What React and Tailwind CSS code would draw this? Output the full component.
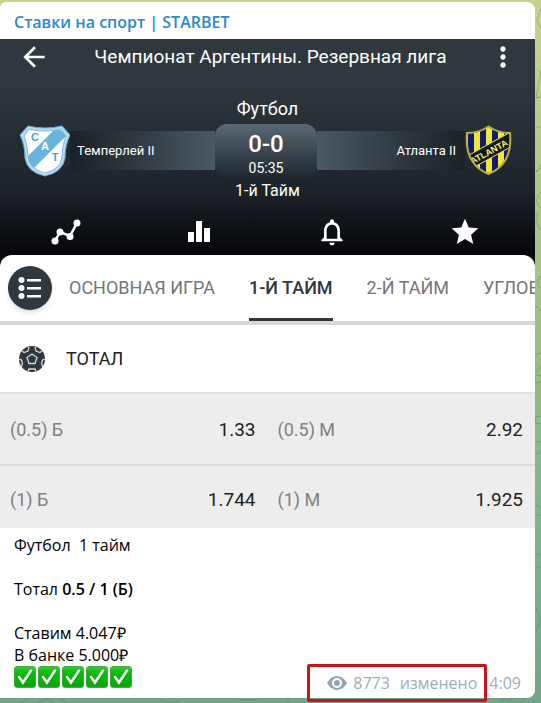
import React from 'react';
import { MdArrowBack, MdMoreVert, MdStar, MdNotificationsNone } from 'react-icons/md';

const tabs = [
    { label: 'ОСНОВНАЯ ИГРА', active: false },
    { label: '1-Й ТАЙМ', active: true },
    { label: '2-Й ТАЙМ', active: false },
    { label: 'УГЛОВЫЕ', active: false },
];

const odds = [
    [['(0.5) Б', '1.33'], ['(0.5) М', '2.92']],
    [['(1) Б', '1.744'], ['(1) М', '1.925']],
];

function TemperleyCrest() {
    return (
        <svg viewBox="0 0 50 52" className="w-[50px] h-[52px] shrink-0" aria-label="Темперлей">
            <defs>
                <clipPath id="temperley">
                    <path d="M9 4 Q25 8 41 4 L46 11 Q42 20 42 32 Q41 44 25 48 Q9 44 8 32 Q8 20 4 11 Z" />
                </clipPath>
            </defs>
            <path d="M8 1 Q25 5 42 1 L50 10 Q45 20 45 33 Q43 47 25 51 Q7 47 5 33 Q5 20 0 10 Z" fill="#b5dcef" stroke="#6dacd0" strokeWidth="1" />
            <g clipPath="url(#temperley)">
                <rect width="50" height="52" fill="#fff" />
                <path d="M4 35 L36 3 L48 9 L10 47 Z" fill="#67b4dd" />
            </g>
            <path d="M9 4 Q25 8 41 4 L46 11 Q42 20 42 32 Q41 44 25 48 Q9 44 8 32 Q8 20 4 11 Z" fill="none" stroke="#7bbcdc" strokeWidth="1" />
            <g fontFamily="Liberation Sans, sans-serif" fontWeight="700" fontSize="11" textAnchor="middle">
                <text x="15" y="16" fill="#4d9fca">C</text>
                <text x="25" y="25" fill="#fff">A</text>
                <text x="35" y="36" fill="#4d9fca">T</text>
            </g>
        </svg>
    );
}

function AtlantaCrest() {
    return (
        <svg viewBox="0 0 47 51" className="w-[47px] h-[51px] shrink-0" aria-label="Атланта">
            <defs>
                <clipPath id="atlanta">
                    <path d="M2 8 Q14 8 23.5 1.500 Q33 8 45 8 Q48 39 23.500 49 Q-1 39 2 8 Z" />
                </clipPath>
            </defs>
            <g clipPath="url(#atlanta)">
                <rect width="47" height="51" fill="#f0e63a" />
                <path d="M3 0h6v51H3zM15 0h6v51h-6zM27 0h6v51h-6zM39 0h6v51h-6z" fill="#141c69" />
                <g transform="rotate(-29 24 27)">
                    <rect x="-4" y="20" width="56" height="13" fill="#14171c" stroke="#e8df56" strokeWidth="1" />
                    <text x="24" y="30" textAnchor="middle" fontFamily="Liberation Sans, sans-serif" fontWeight="700" fontSize="9" fill="#f4ed6a">ATLANTA</text>
                </g>
            </g>
            <path d="M2 8 Q14 8 23.5 1.500 Q33 8 45 8 Q48 39 23.500 49 Q-1 39 2 8 Z" fill="none" stroke="#b6ae4c" strokeWidth="2" />
        </svg>
    );
}

function TrendIcon() {
    return (
        <svg viewBox="0 0 30 26" className="w-[30px] h-[26px]" fill="#fff">
            <path d="M4 22 L9 13 L19 17 L26 4" fill="none" stroke="#fff" strokeWidth="2.500" />
            <circle cx="4" cy="22" r="3.500" />
            <circle cx="9" cy="13" r="3.500" />
            <circle cx="19" cy="17.500" r="3.500" />
            <circle cx="26" cy="4" r="3.500" />
        </svg>
    );
}

function BarsIcon() {
    return (
        <svg viewBox="0 0 22 22" className="w-[22px] h-[22px]" fill="#fff">
            <path d="M0 11h6v10H0zM8 0h6v21H8zM16 7h6v14h-6z" />
        </svg>
    );
}

function BallIcon() {
    return (
        <svg viewBox="0 0 26 26" className="w-[26px] h-[26px]">
            <circle cx="13" cy="13" r="13" fill="#2e383e" />
            <g fill="none" stroke="#d5d9db" strokeWidth="1.300">
                <path d="M13 8 L18 11.500 L16 17.500 H10 L8 11.500 Z" />
                <path d="M3 5 L5 6.500 L9 5 L10 1M16 1 L17 5 L21 6.500 L23 5M0 13 L2.500 14 L3.500 18 L2 21M26 13 L23.500 14 L22.500 18 L24 21M9 25 L10 23 H16 L17 25" />
            </g>
        </svg>
    );
}

function CheckBox() {
    return (
        <svg viewBox="0 0 22 22" className="w-[22px] h-[22px]">
            <defs>
                <linearGradient id="check" x1="0" y1="0" x2="0" y2="1">
                    <stop offset="0" stopColor="#3fc83c" />
                    <stop offset="0.300" stopColor="#08bd08" />
                    <stop offset="1" stopColor="#0aa50e" />
                </linearGradient>
            </defs>
            <rect x="0.500" y="0.500" width="21" height="21" rx="2.500" fill="url(#check)" stroke="#3fae3b" />
            <path d="M5 11 L9 16.500 L17 4.500" fill="none" stroke="#fff" strokeWidth="2.500" strokeLinecap="round" />
        </svg>
    );
}

// faint chat wallpaper lines along the right and bottom edge
function Doodles() {
    return (
        <svg className="absolute inset-0 w-full h-full" fill="none" stroke="#3f7d52" strokeOpacity="0.350">
            <path d="M541 8 L537 20 L541 28M541 70 L536 98 L541 96M536 127 H541M541 165 L536 172 L541 168M541 192 Q532 202 541 208M537 212 V222 Q538 228 541 230M541 276 Q534 282 541 288M536 306 L541 311M536 356 Q539 351 541 354M536 372 L541 366M536 442 H541M536 454 L541 452M536 505 L541 508M536 515 H541M536 554 L541 556M536 567 H541M536 608 L541 620 L536 632" />
            <circle cx="538" cy="379" r="4" />
            <circle cx="539" cy="420" r="4" />
            <path d="M22 703 L26 699M38 703 Q46 694 54 703M60 698 L66 703M160 699 Q170 706 182 699M238 700 H258M288 698 V703M500 703 L504 698 H512 L508 703M520 703 L526 697" />
        </svg>
    );
}

function MatchHeader() {
    return (
        <header className="bg-gradient-to-b from-[#2e383e] from-20% via-[#1d232a] via-70% to-[#060709] text-white">
            <div className="flex items-center h-9 pl-[22px] pr-5">
                <button aria-label="Назад"><MdArrowBack className="w-6 h-7" viewBox="3 3 18 18" /></button>
                <h1 className="flex-1 pl-1 text-center text-[19px] leading-6">Чемпионат Аргентины. Резервная лига</h1>
                <button aria-label="Меню"><MdMoreVert className="w-6 h-7" viewBox="3 3 18 18" /></button>
            </div>

            <p className="mt-[22px] text-center text-lg leading-6">Футбол</p>

            <div className="flex items-center mt-[3px]">
                <div className="flex flex-1 items-center pl-5">
                    <TemperleyCrest />
                    <div className="flex flex-1 items-center h-[39px] pl-[7px] bg-gradient-to-r from-[#1b2127] to-[#4a5963] text-[13px]">Темперлей II</div>
                </div>
                <div className="flex flex-col items-center w-[102px] h-[53px] rounded-xl bg-gradient-to-b from-[#596974] to-[#202932]">
                    <span className="mt-1 text-2xl leading-8 font-medium">0-0</span>
                    <span className="text-sm leading-4">05:35</span>
                </div>
                <div className="flex flex-1 items-center pr-[23px]">
                    <div className="flex flex-1 items-center justify-end h-[39px] pr-[9px] bg-gradient-to-l from-[#1b2127] to-[#4a5963] text-[13px]">Атланта II</div>
                    <AtlantaCrest />
                </div>
            </div>

            <p className="mt-1 text-center text-base leading-5">1-й Тайм</p>

            <nav className="grid grid-cols-4 h-[54px] pt-3 pb-1 pr-1 place-items-center">
                <button aria-label="График"><TrendIcon /></button>
                <button aria-label="Статистика"><BarsIcon /></button>
                <button aria-label="Уведомления"><MdNotificationsNone className="w-8 h-8" /></button>
                <button aria-label="Избранное"><MdStar className="w-8 h-8" /></button>
            </nav>
        </header>
    );
}

function Market() {
    return (
        <section className="bg-[#060709]">
            <div className="flex h-[66px] items-stretch rounded-t-xl bg-white pl-2 overflow-hidden">
                <button aria-label="Список" className="self-center shrink-0 w-11 h-11 rounded-full bg-[#2e383e] shadow-md flex items-center justify-center">
                    <svg viewBox="0 0 24 22" className="w-6 h-[22px]" fill="#fff">
                        <circle cx="3.500" cy="3" r="3" /><circle cx="3.500" cy="11" r="3" /><circle cx="3.500" cy="19" r="3" />
                        <path d="M9 2h14v2.500H9zM9 10h14v2.500H9zM9 18h14v2.500H9z" />
                    </svg>
                </button>
                <div className="flex gap-[34px] ml-[17px] text-lg whitespace-nowrap" role="tablist">
                    {tabs.map(tab => (
                        <button
                            key={tab.label}
                            role="tab"
                            aria-selected={tab.active}
                            className={tab.active ? 'border-b-3 pt-[3px] border-[#2e383e] text-[#2e383e] font-medium' : 'text-[#757575]'}
                        >
                            {tab.label}
                        </button>
                    ))}
                </div>
            </div>
            <div className="h-1 bg-[#d5d7d9]" />

            <div className="flex items-center h-[67px] pl-[19px] gap-[21px] bg-white">
                <BallIcon />
                <h2 className="text-lg text-[#212121]">ТОТАЛ</h2>
            </div>

            <div className="border-t-2 border-[#e0e0e0] bg-[#ededed]">
                <table className="w-full table-fixed">
                    <tbody>
                        {odds.map((row, i) => (
                            <tr key={i} className={i === 0 ? 'h-[71px] border-b-2 border-[#dcdcdc]' : 'h-[63px]'}>
                                {row.map(([name, value]) => (
                                    <td key={name} className={i === 0 ? 'pl-2.5 pr-3 pt-0.5' : 'pl-2.5 pr-3 pt-1.5'}>
                                        <button className="flex w-full items-baseline justify-between">
                                            <span className="text-lg text-[#808080]">{name}</span>
                                            <span className="text-[19px] text-[#212121]">{value}</span>
                                        </button>
                                    </td>
                                ))}
                            </tr>
                        ))}
                    </tbody>
                </table>
            </div>
        </section>
    );
}

export default function App() {
    return (
        <div className="relative min-h-screen pt-0.5 pr-1.5 pb-[5px] bg-gradient-to-b from-[#c9d28c] via-[#8fbd84] via-55% to-[#71a588] font-['Open_Sans',sans-serif]">
            <Doodles />
            <article className="relative rounded-tl-md rounded-r-lg bg-white">
                <a href="#" className="block h-[37px] pl-3.5 pt-2 text-base leading-6 font-semibold text-[#2b8ac6]">Ставки на спорт | STARBET</a>

                <div className="font-['Roboto',sans-serif]">
                    <MatchHeader />
                    <Market />
                </div>

                <div className="px-3.5 pt-1.5 pb-2.5 text-base leading-[22px] text-black">
                    <p className="whitespace-pre">Футбол  1 тайм</p>
                    <p className="mt-[22px]">Тотал <b className="font-semibold">0.5 / 1 (Б)</b></p>
                    <p className="mt-[22px]">Ставим 4.047₽</p>
                    <p>В банке 5.000₽</p>
                    <div className="flex h-[22px] items-start justify-between">
                        <div className="flex gap-0.5">
                            {[1, 2, 3, 4, 5].map(n => <CheckBox key={n} />)}
                        </div>
                        <div className="flex gap-3 pt-1.5 text-[#a0acb6]">
                            <span className="relative flex items-center gap-1.5">
                                <svg viewBox="0 0 20 14" className="w-5 h-3.5">
                                    <path d="M0 7 Q4 0 10 0 T20 7 Q16 14 10 14 T0 7 Z" fill="#96a5b3" />
                                    <circle cx="10" cy="7" r="4" fill="none" stroke="#fff" strokeWidth="2" />
                                </svg>
                                <span>8773</span>
                                <span className="ml-1">изменено</span>
                                <span className="absolute -left-5 -right-2.5 -inset-y-2 border-3 rounded-xs border-[#c4161c]" />
                            </span>
                            <time>4:09</time>
                        </div>
                    </div>
                </div>
            </article>
        </div>
    );
}
